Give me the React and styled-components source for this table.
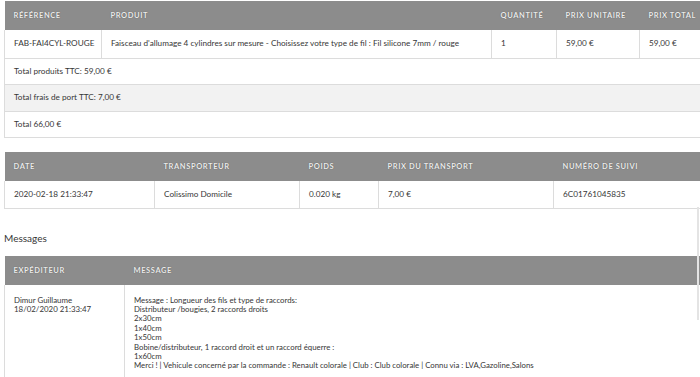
import React from "react";
import styled, { createGlobalStyle } from "styled-components";

const Global = createGlobalStyle`
  html, body { margin: 0; padding: 0; background: #fff; overflow: hidden; }
  body { font-family: Lato, "Noto Sans", sans-serif; color: #363636; }
`;

const Page = styled.div`
  position: relative;
  padding: 1px 0 0 4px;
  width: 700px;
  box-sizing: border-box;
`;

const Table = styled.table`
  width: 700px;
  border-collapse: collapse;
  table-layout: fixed;
  margin-bottom: ${(p) => p.$mb || 0}px;
`;

const Th = styled.th`
  background: #8c8c8c;
  color: #ececec;
  text-shadow: 0 0 1px rgba(0, 0, 0, 0.45);
  font-size: 7.5px;
  font-weight: 700;
  letter-spacing: 0.6px;
  text-transform: uppercase;
  text-align: left;
  height: 29px;
  padding: 0 0 0 9px;
  box-sizing: border-box;
`;

const Td = styled.td`
  font-size: ${(p) => p.$fs || 8.2}px;
  height: ${(p) => p.$h || 27}px;
  padding: 0 0 0 9px;
  box-sizing: border-box;
  border: 1px solid #dcdcdc;
  border-top: none;
  background: ${(p) => (p.$alt ? "#f2f2f2" : "#fff")};
  white-space: nowrap;
  vertical-align: ${(p) => (p.$top ? "top" : "middle")};
  line-height: 9.4px;
  padding-top: ${(p) => (p.$top ? "11px" : "0")};
`;

const SectionTitle = styled.div`
  font-size: 10px;
  height: 15px;
  line-height: 15px;
  margin: 0 0 10px 0;
`;

const Line = styled.div``;

const EdgeLine = styled.div`
  position: absolute;
  left: 697px;
  top: 207px;
  width: 2px;
  height: 113px;
  background: #e4e4e4;
`;

export default function App() {
  const msg = [
    "Message : Longueur des fils et type de raccords:",
    "Distributeur /bougies, 2 raccords droits",
    "2x30cm",
    "1x40cm",
    "1x50cm",
    "Bobine/distributeur, 1 raccord droit et un raccord équerre :",
    "1x60cm",
    "Merci ! | Vehicule concerné par la commande : Renault colorale | Club : Club colorale | Connu via : LVA,Gazoline,Salons",
  ];
  return (
    <>
      <Global />
      <Page>
        <Table $mb={14}>
          <colgroup>
            <col style={{ width: 97 }} />
            <col style={{ width: 390 }} />
            <col style={{ width: 65 }} />
            <col style={{ width: 83 }} />
            <col />
          </colgroup>
          <thead>
            <tr>
              <Th>Référence</Th>
              <Th>Produit</Th>
              <Th>Quantité</Th>
              <Th>Prix unitaire</Th>
              <Th>Prix total</Th>
            </tr>
          </thead>
          <tbody>
            <tr>
              <Td $h={28}>FAB-FAI4CYL-ROUGE</Td>
              <Td $h={28}>
                Faisceau d'allumage 4 cylindres sur mesure - Choisissez votre type de fil : Fil silicone 7mm / rouge
              </Td>
              <Td $h={28}>1</Td>
              <Td $h={28}>59,00 €</Td>
              <Td $h={28}>59,00 €</Td>
            </tr>
            <tr>
              <Td colSpan={5} $h={26.5}>Total produits TTC: 59,00 €</Td>
            </tr>
            <tr>
              <Td colSpan={5} $h={26.5} $alt>Total frais de port TTC: 7,00 €</Td>
            </tr>
            <tr>
              <Td colSpan={5} $h={26.5}>Total 66,00 €</Td>
            </tr>
          </tbody>
        </Table>

        <Table $mb={22}>
          <colgroup>
            <col style={{ width: 150 }} />
            <col style={{ width: 145 }} />
            <col style={{ width: 79 }} />
            <col style={{ width: 175 }} />
            <col />
          </colgroup>
          <thead>
            <tr>
              <Th>Date</Th>
              <Th>Transporteur</Th>
              <Th>Poids</Th>
              <Th>Prix du transport</Th>
              <Th>Numéro de suivi</Th>
            </tr>
          </thead>
          <tbody>
            <tr>
              <Td $h={27}>2020-02-18 21:33:47</Td>
              <Td $h={27}>Colissimo Domicile</Td>
              <Td $h={27}>0.020 kg</Td>
              <Td $h={27}>7,00 €</Td>
              <Td $h={27}>6C01761045835</Td>
            </tr>
          </tbody>
        </Table>

        <SectionTitle>Messages</SectionTitle>

        <Table>
          <colgroup>
            <col style={{ width: 120 }} />
            <col />
          </colgroup>
          <thead>
            <tr>
              <Th>Expéditeur</Th>
              <Th>Message</Th>
            </tr>
          </thead>
          <tbody>
            <tr>
              <Td $top $h={100} $fs={7.9}>
                <Line>Dimur Guillaume</Line>
                <Line>18/02/2020 21:33:47</Line>
              </Td>
              <Td $top $h={100} $fs={7.8}>
                {msg.map((l, i) => (
                  <Line key={i}>{l}</Line>
                ))}
              </Td>
            </tr>
          </tbody>
        </Table>
        <EdgeLine />
      </Page>
    </>
  );
}
